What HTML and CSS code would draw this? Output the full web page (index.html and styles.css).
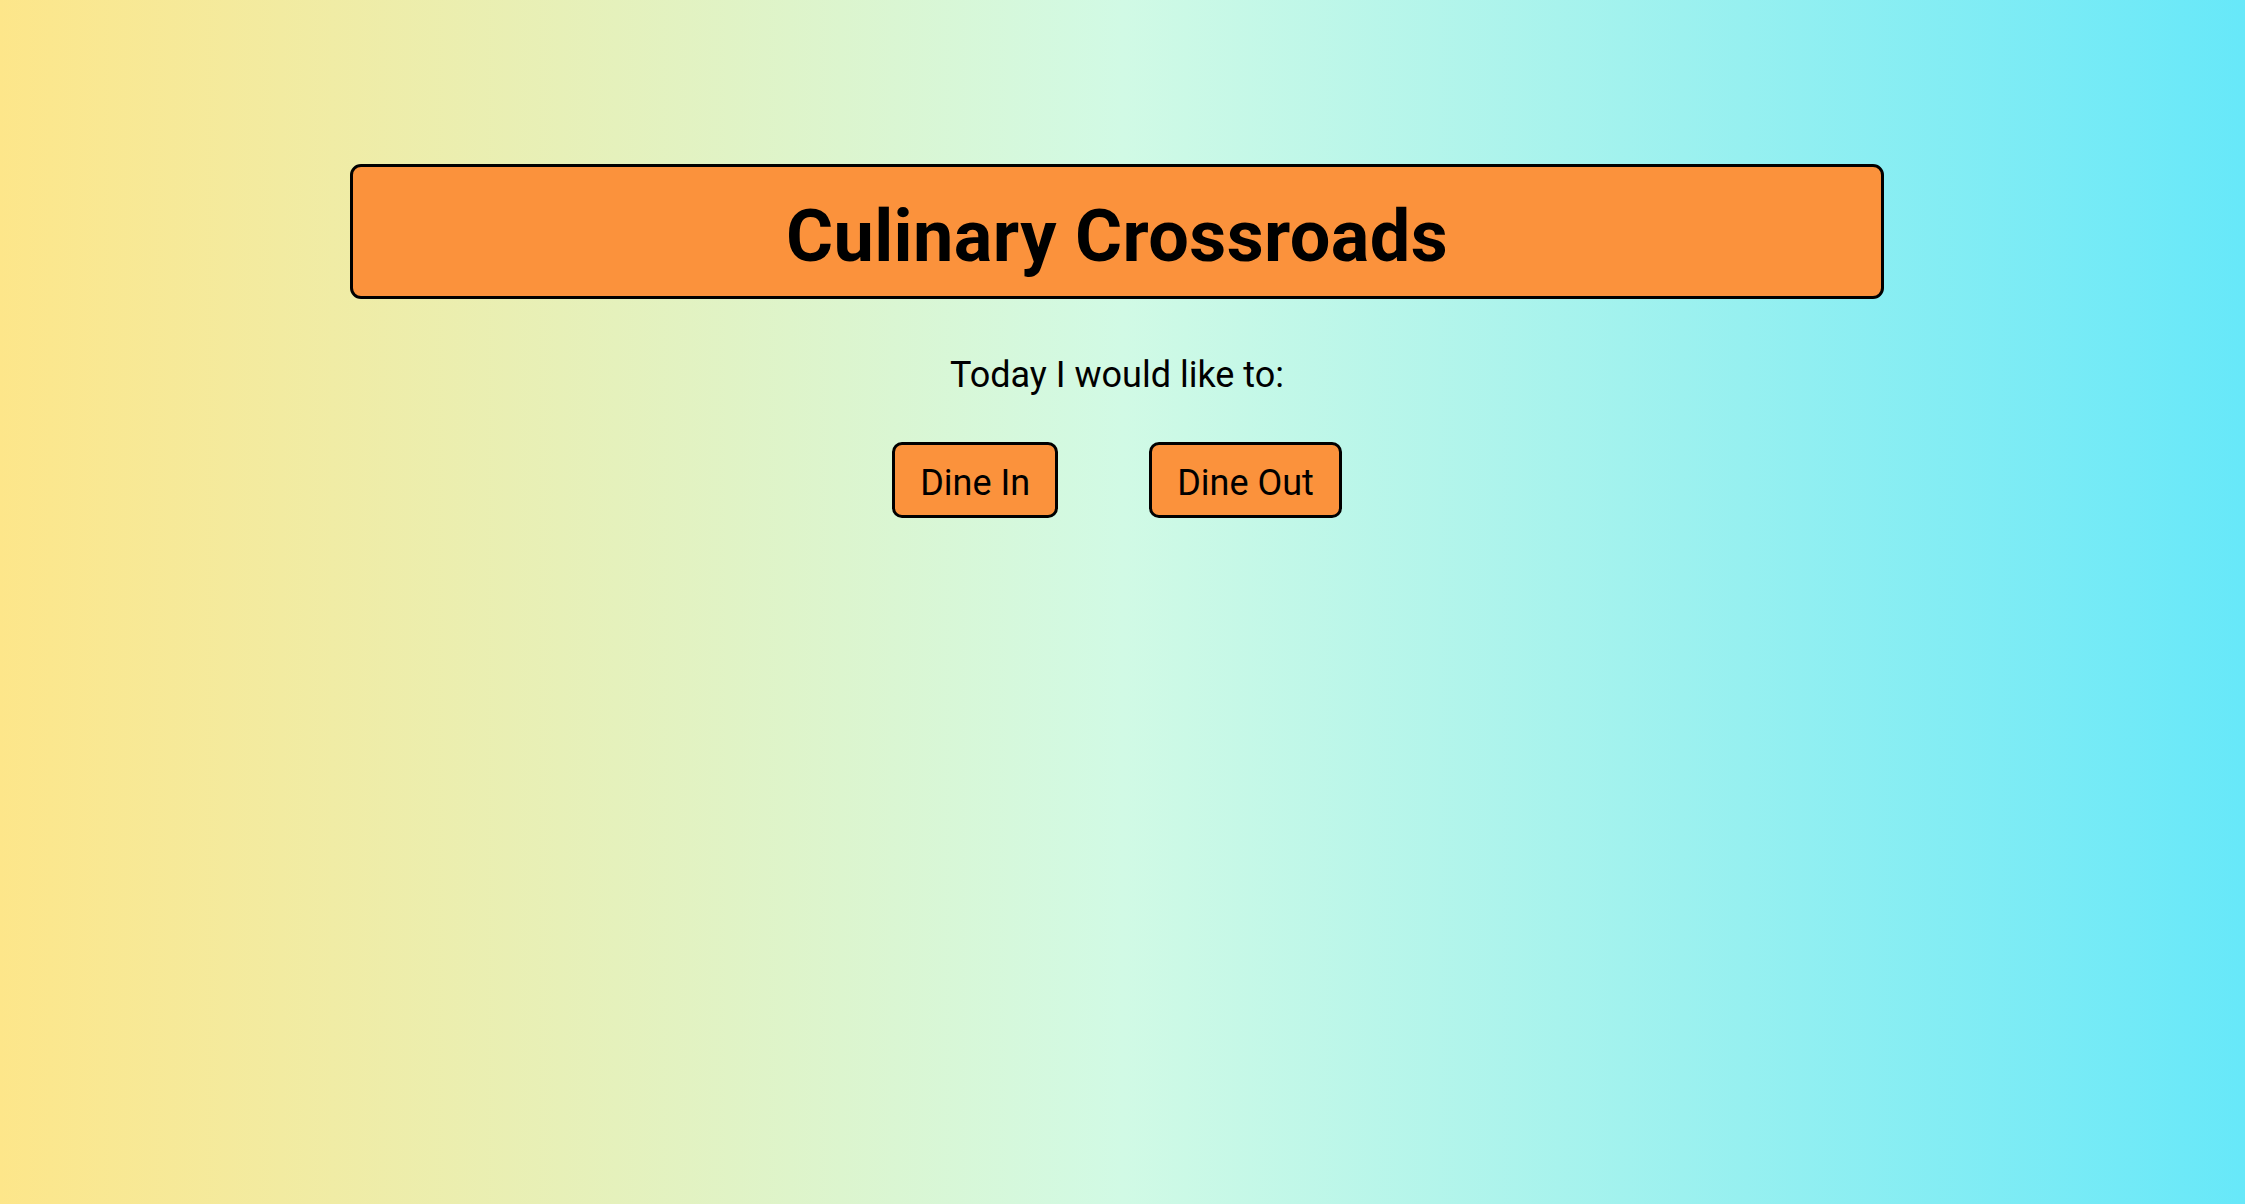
FILE: index.html
```html
<!DOCTYPE html>
<html lang="en">
<head>
<meta charset="utf-8">
<title>Culinary Crossroads</title>
<link rel="stylesheet" href="styles.css">
</head>
<body>
<main class="page">
  <header class="title-box">
    <h1 class="title">Culinary Crossroads</h1>
  </header>
  <p class="prompt">Today I would like to:</p>
  <div class="choices">
    <button class="choice" type="button">Dine In</button>
    <button class="choice" type="button">Dine Out</button>
  </div>
</main>
</body>
</html>
```
FILE: styles.css
```css
html, body {
  margin: 0;
  padding: 0;
}
body {
  min-height: 100vh;
  background: linear-gradient(to right, #fde68a 0%, #d1fae5 50%, #67e8f9 100%);
  font-family: Roboto, "Noto Sans", sans-serif;
  color: #000;
}
.page {
  display: flex;
  flex-direction: column;
  align-items: center;
  padding: 164px 11px 0 0;
}
.title-box {
  box-sizing: border-box;
  width: 1534px;
  background: #fb923c;
  border: 3px solid #000;
  border-radius: 11px;
  padding: 34px 0 23px;
  text-align: center;
}
.title {
  margin: 0;
  font-size: 72px;
  line-height: 72px;
  font-weight: 700;
  letter-spacing: 0.4px;
}
.prompt {
  margin: 56px 0 0;
  font-size: 36px;
  line-height: 40px;
}
.choices {
  display: flex;
  gap: 91px;
  margin-top: 47px;
}
.choice {
  font-family: inherit;
  font-size: 36px;
  line-height: 40px;
  color: #000;
  background: #fb923c;
  border: 3px solid #000;
  border-radius: 10px;
  padding: 18px 25px 12px;
  cursor: pointer;
}
```
